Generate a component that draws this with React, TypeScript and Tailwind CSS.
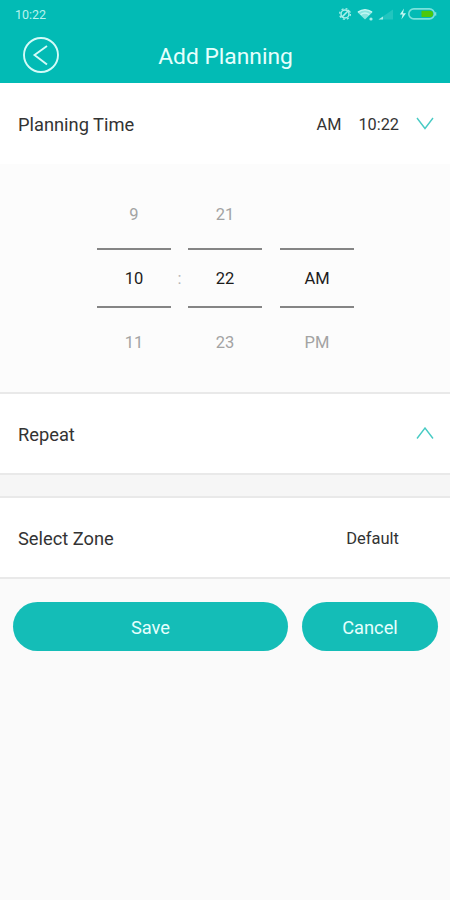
import React from "react";

const hours = ["9", "10", "11"];
const minutes = ["21", "22", "23"];
const periods = ["", "AM", "PM"];

function StatusIcons() {
  return (
    <svg width="102" height="16" viewBox="0 0 102 16" fill="none">
      {/* muted bell */}
      <g stroke="#a9efea" strokeWidth="1.5">
        <circle cx="8" cy="8" r="4" />
        <path d="M4.6 11.4 12 4" />
        <circle cx="8" cy="8" r="5.4" strokeWidth="1.3" strokeDasharray="2 2.24" />
      </g>
      {/* wifi */}
      <path d="M20.5 6.2Q28 0.6 35.5 6.2L28 13.6Z" fill="#8be6e0" />
      <path d="M21 6.2Q28 1.2 35 6.2" stroke="#c4f7f3" strokeWidth="1.6" />
      <path d="M23.6 8.6Q28 5.4 32.4 8.6" stroke="#c4f7f3" strokeWidth="1.4" />
      <circle cx="34" cy="13" r="1.6" fill="#a5eee9" />
      {/* signal */}
      <path d="M41.5 13.5 56 3.5v10z" fill="#22c5bf" />
      <path d="M41.5 13.5 46 10.4v3.1z" fill="#a5eee9" />
      {/* charging battery */}
      <path d="M67 2.5 62.8 8.6h2.8L64.4 13.5 69 7.2h-3z" fill="#c4f7f3" />
      <rect x="71.8" y="2.9" width="25.6" height="10" rx="5" stroke="#7be2dc" strokeWidth="1.6" />
      <path d="M98.6 6.2v3.4" stroke="#7be2dc" strokeWidth="1.4" />
      <path d="M84.5 4.8H93a3.1 3.1 0 0 1 0 6.2h-8.5z" fill="#4cc80c" />
    </svg>
  );
}

function Chevron({ up }: { up?: boolean }) {
  return (
    <svg width="18" height="13" viewBox="0 0 18 13" fill="none">
      <path
        d={up ? "M1 11.5 9 1 17 11.5" : "M1 1 9 11.5 17 1"}
        stroke="#48cbc4"
        strokeWidth="1.4"
      />
    </svg>
  );
}

function PickerColumn({ values }: { values: string[] }) {
  return (
    <div className="w-[74px] text-center text-[16.5px] leading-6">
      <div className="h-[45px] text-[#a3a3a3]">{values[0]}</div>
      <div className="flex h-[60px] items-center justify-center border-y-2 border-[#858585] pt-0.5 text-[#1c1c1c]">
        {values[1]}
      </div>
      <div className="pt-[23px] text-[#a3a3a3]">{values[2]}</div>
    </div>
  );
}

export default function App() {
  return (
    <div className="min-h-screen bg-[#fafafa] font-['Roboto',sans-serif] text-[#333333]">
      <header className="h-[83px] bg-[#02bbb5] text-[#e6fffd]">
        <div className="flex h-7 items-center justify-between pl-[15px] pr-[11px] text-[12.5px] text-[#b9f3ef]">
          <span className="pt-0.5">10:22</span>
          <StatusIcons />
        </div>
        <div className="grid h-[55px] grid-cols-[1fr_auto_1fr] items-center pl-[23px] pr-[22px]">
          <button aria-label="Back" className="h-[37px] w-[37px]">
            <svg width="37" height="37" viewBox="0 0 37 37" fill="none" stroke="#d4fbf8">
              <circle cx="18" cy="18" r="17" strokeWidth="1.9" />
              <path d="M24 9 11.5 18 24 27.5" strokeWidth="1.9" />
            </svg>
          </button>
          <h1 className="pt-[3px] text-[22.8px] leading-7">Add Planning</h1>
        </div>
      </header>

      <section className="flex h-[81px] items-center bg-white pl-[18px] pr-4">
        <span className="flex-1 pt-0.5 text-[18.3px]">Planning Time</span>
        <span className="pt-[3px] text-[16.3px]">AM</span>
        <span className="ml-[17px] mr-[17px] pt-[3px] text-[16.3px]">10:22</span>
        <Chevron />
      </section>

      <section className="flex h-[230px] border-b-2 border-[#e9e9e9] bg-[#fcfcfc] pl-[97px] pt-[39px]">
        <PickerColumn values={hours} />
        <div className="w-[17px] pt-[64px] text-center text-[16.5px] leading-6 text-[#b5b5b5]">
          :
        </div>
        <PickerColumn values={minutes} />
        <div className="w-[18px]" />
        <PickerColumn values={periods} />
      </section>

      <section className="flex h-[81px] items-center border-b-2 border-[#e9e9e9] bg-white pl-[18px] pr-4">
        <span className="flex-1 pt-0.5 text-[18.3px]">Repeat</span>
        <Chevron up />
      </section>

      <div className="h-[23px] border-b-2 border-[#e9e9e9] bg-[#f6f6f6]" />

      <section className="flex h-[81px] items-center border-b-2 border-[#e9e9e9] bg-white pl-[18px] pr-[51px]">
        <span className="flex-1 pt-0.5 text-[18.3px]">Select Zone</span>
        <span className="pt-[3px] text-[16.5px]">Default</span>
      </section>

      <div className="flex gap-[14px] pl-[13px] pr-3 pt-[23px] text-[18.3px] text-[#e6fffd]">
        <button className="h-[49px] w-[275px] rounded-full bg-[#14bdb7] pt-0.5">Save</button>
        <button className="h-[49px] flex-1 rounded-full bg-[#14bdb7] pt-0.5">Cancel</button>
      </div>
    </div>
  );
}
